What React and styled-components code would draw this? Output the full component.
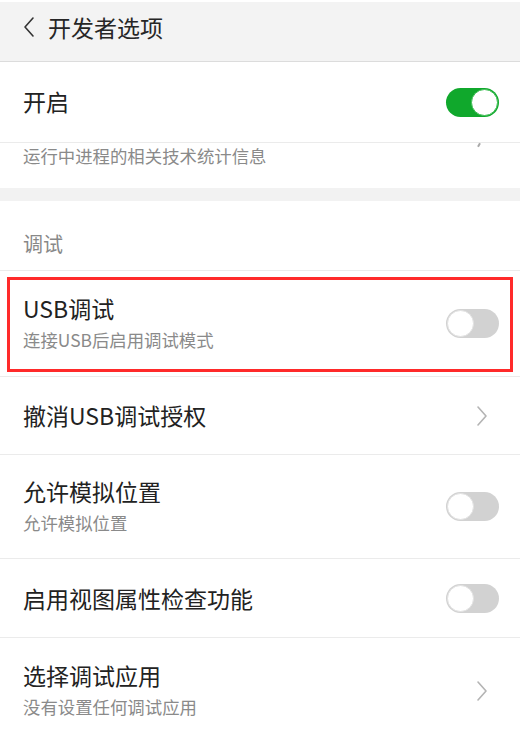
import React from "react";
import styled, { createGlobalStyle } from "styled-components";

const GlobalStyle = createGlobalStyle`
  html, body {
    margin: 0;
    padding: 0;
    background: #ffffff;
  }
  body {
    font-family: "Noto Sans CJK SC", "Noto Sans", sans-serif;
    -webkit-font-smoothing: antialiased;
  }
`;

const Page = styled.div`
  width: 520px;
  height: 732px;
  overflow: hidden;
  padding-top: 2px;
  box-sizing: border-box;
  background: #ffffff;
`;

const Header = styled.div`
  height: 60px;
  box-sizing: border-box;
  display: flex;
  align-items: center;
  gap: 13px;
  padding: 0 0 10px 23px;
  background: #f3f3f3;
  border-bottom: 1px solid #dcdcdc;
`;

const HeaderTitle = styled.h1`
  margin: 0;
  font-size: 23px;
  font-weight: 400;
  color: #262626;
  line-height: 30px;
`;

const Row = styled.div`
  position: relative;
  height: ${(p) => p.$h}px;
  box-sizing: border-box;
  display: flex;
  align-items: center;
  justify-content: space-between;
  padding: 0 20px 0 23px;
  border-bottom: ${(p) => (p.$last ? "none" : "1px solid #ebebeb")};

  ${(p) =>
    p.$marked &&
    `
    &::after {
      content: "";
      position: absolute;
      left: 7px;
      right: 7px;
      top: 6px;
      bottom: 4px;
      border: 3px solid #ff2a2a;
      pointer-events: none;
    }
  `}
`;

const TextBlock = styled.div`
  display: flex;
  flex-direction: column;
  margin-top: ${(p) => p.$shift || 0}px;
`;

const Title = styled.div`
  font-size: 23px;
  line-height: 32px;
  color: #222222;
  margin-top: ${(p) => p.$shift || 0}px;
`;

const Subtitle = styled.div`
  font-size: 17.4px;
  line-height: 32px;
  color: #8a8a8a;
`;

const PartialRow = styled.div`
  position: relative;
  height: 45px;
  box-sizing: border-box;
  padding: 0 23px;
`;

const PartialText = styled.div`
  font-size: 17.4px;
  line-height: 26px;
  color: #8a8a8a;
`;

const ChevronStub = styled.span`
  position: absolute;
  right: 40px;
  top: 0;
  width: 2px;
  height: 4px;
  background: #a8a8a8;
  transform: rotate(30deg);
`;

const Band = styled.div`
  height: 13px;
  background: #f2f2f2;
`;

const SectionLabel = styled.div`
  height: 70px;
  box-sizing: border-box;
  padding: 31px 23px 0;
  font-size: 20px;
  line-height: 24px;
  color: #888888;
  border-bottom: 1px solid #ebebeb;
`;

const Track = styled.div`
  position: relative;
  flex: none;
  width: 53px;
  height: 29px;
  border-radius: 15px;
  background: ${(p) => (p.$on ? "#10a82c" : "#d2d2d2")};
  margin-right: 1px;
`;

const Knob = styled.div`
  position: absolute;
  top: 1px;
  ${(p) => (p.$on ? "right: 1px;" : "left: 1px;")}
  width: 27px;
  height: 27px;
  box-sizing: border-box;
  border-radius: 50%;
  background: #ffffff;
  border: 1px solid ${(p) => (p.$on ? "#3fbe55" : "#e2e2e2")};
`;

function Toggle({ on }) {
  return (
    <Track $on={on}>
      <Knob $on={on} />
    </Track>
  );
}

function Chevron({ color = "#b4b4b4", flip }) {
  return (
    <svg
      width="12"
      height="22"
      viewBox="0 0 12 22"
      style={{ flex: "none", marginRight: flip ? 0 : 12 }}
    >
      <path
        d={flip ? "M10 2 L2 11 L10 20" : "M2 2 L10 11 L2 20"}
        fill="none"
        stroke={color}
        strokeWidth="1.6"
        strokeLinecap="round"
        strokeLinejoin="round"
      />
    </svg>
  );
}

export default function App() {
  return (
    <>
      <GlobalStyle />
      <Page>
        <Header>
          <Chevron flip color="#333333" />
          <HeaderTitle>开发者选项</HeaderTitle>
        </Header>

        <Row $h={81}>
          <Title $shift={-3}>开启</Title>
          <Toggle on />
        </Row>

        <PartialRow>
          <PartialText>运行中进程的相关技术统计信息</PartialText>
          <ChevronStub />
        </PartialRow>

        <Band />

        <SectionLabel>调试</SectionLabel>

        <Row $h={106} $marked>
          <TextBlock>
            <Title>USB调试</Title>
            <Subtitle>连接USB后启用调试模式</Subtitle>
          </TextBlock>
          <Toggle />
        </Row>

        <Row $h={78}>
          <Title $shift={-2}>撤消USB调试授权</Title>
          <Chevron />
        </Row>

        <Row $h={104}>
          <TextBlock>
            <Title>允许模拟位置</Title>
            <Subtitle>允许模拟位置</Subtitle>
          </TextBlock>
          <Toggle />
        </Row>

        <Row $h={79}>
          <Title>启用视图属性检查功能</Title>
          <Toggle />
        </Row>

        <Row $h={106} $last>
          <TextBlock>
            <Title>选择调试应用</Title>
            <Subtitle>没有设置任何调试应用</Subtitle>
          </TextBlock>
          <Chevron />
        </Row>
      </Page>
    </>
  );
}
